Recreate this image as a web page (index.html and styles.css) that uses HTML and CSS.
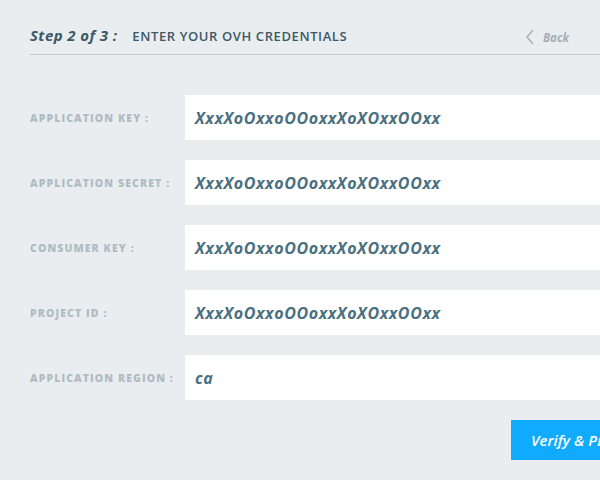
FILE: index.html
```html
<!DOCTYPE html>
<html>
<head>
<meta charset="utf-8">
<link rel="stylesheet" href="styles.css">
</head>
<body>
<div class="page">
  <header class="head">
    <div class="title">
      <span class="step">Step 2 of 3 :</span>
      <span class="heading">ENTER YOUR OVH CREDENTIALS</span>
    </div>
    <a class="back">
      <svg width="10" height="16" viewBox="0 0 10 16"><path d="M8 1 L2 8 L8 15" fill="none" stroke="#a5aeb4" stroke-width="1.4"/></svg>
      <span>Back</span>
    </a>
  </header>
  <form class="form">
    <div class="row"><label class="lbl">APPLICATION KEY :</label><div class="field">XxxXoOxxoOOoxxXoXOxxOOxx</div></div>
    <div class="row"><label class="lbl">APPLICATION SECRET :</label><div class="field">XxxXoOxxoOOoxxXoXOxxOOxx</div></div>
    <div class="row"><label class="lbl">CONSUMER KEY :</label><div class="field">XxxXoOxxoOOoxxXoXOxxOOxx</div></div>
    <div class="row"><label class="lbl">PROJECT ID :</label><div class="field">XxxXoOxxoOOoxxXoXOxxOOxx</div></div>
    <div class="row"><label class="lbl">APPLICATION REGION :</label><div class="field">ca</div></div>
    <div class="actions"><button type="button" class="btn">Verify &amp; Proceed</button></div>
  </form>
</div>
</body>
</html>
```
FILE: styles.css
```css
html, body { margin: 0; padding: 0; }
body {
  background: #e9edf0;
  width: 600px;
  height: 480px;
  overflow: hidden;
  font-family: "Open Sans", Lato, sans-serif;
}
.page { padding: 0 0 0 30px; }
.head {
  height: 55px;
  border-bottom: 1px solid #c3c7ca;
  display: flex;
  align-items: flex-end;
  justify-content: space-between;
  box-sizing: border-box;
  padding-bottom: 9px;
}
.title { display: flex; align-items: baseline; white-space: nowrap; }
.step {
  font-style: italic;
  font-weight: 700;
  font-size: 15px;
  letter-spacing: 0.4px;
  color: #3d5865;
  margin-right: 15px;
}
.heading {
  font-weight: 600;
  font-size: 13px;
  letter-spacing: 0.6px;
  color: #3d5865;
}
.back {
  display: flex;
  align-items: center;
  gap: 8px;
  margin-right: 31px;
  color: #a5aeb4;
  font-style: italic;
  font-weight: 700;
  font-size: 11.5px;
}
.form { padding-top: 40px; }
.row {
  display: flex;
  align-items: center;
  height: 45px;
  margin-bottom: 20px;
}
.lbl {
  width: 155px;
  flex: none;
  font-size: 10.5px;
  font-weight: 800;
  letter-spacing: 1.1px;
  color: #b0bcc3;
  white-space: nowrap;
}
.field {
  flex: 1;
  height: 45px;
  background: #fff;
  display: flex;
  align-items: center;
  padding-left: 10px;
  font-style: italic;
  font-weight: 700;
  font-size: 16px;
  letter-spacing: 0.6px;
  color: #4a7080;
  white-space: nowrap;
}
.actions { display: flex; }
.btn {
  margin-left: 481px;
  width: 200px;
  flex: none;
  height: 40px;
  background: #10aaff;
  border: 0;
  color: #fff;
  font-family: "Open Sans", Lato, sans-serif;
  font-style: italic;
  font-weight: 600;
  font-size: 15px;
  text-align: left;
  padding-left: 20px;
}
```
